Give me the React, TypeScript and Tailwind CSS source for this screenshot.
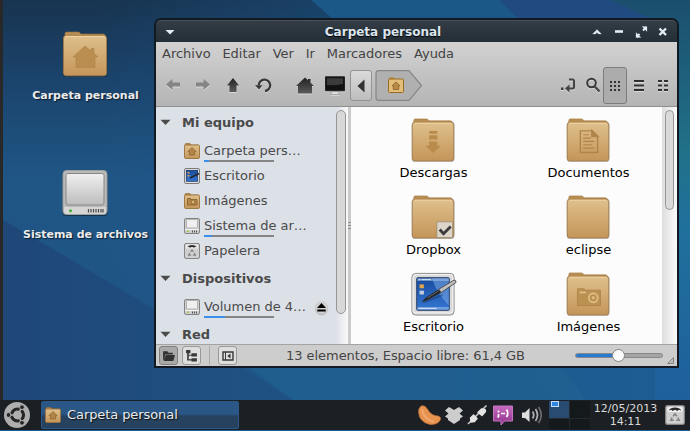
import React from "react";

type Emblem = "home" | "down" | "doc" | "camera" | "check" | "none";

function Defs() {
  return (
    <svg className="absolute h-0 w-0" aria-hidden="true">
      <defs>
        <linearGradient id="folder" x1="0" y1="0" x2="0" y2="1">
          <stop offset="0" stopColor="#dfc08c" />
          <stop offset="1" stopColor="#c4955a" />
        </linearGradient>
        <linearGradient id="silver" x1="0" y1="0" x2="0" y2="1">
          <stop offset="0" stopColor="#f0f0f0" />
          <stop offset="1" stopColor="#bdbdbd" />
        </linearGradient>
        <linearGradient id="screen" x1="0" y1="0" x2="0" y2="1">
          <stop offset="0" stopColor="#174a9c" />
          <stop offset="1" stopColor="#3577d2" />
        </linearGradient>
        <linearGradient id="ink" x1="0" y1="0" x2="0" y2="1">
          <stop offset="0" stopColor="#222" />
          <stop offset="1" stopColor="#5a5a5a" />
        </linearGradient>
        <linearGradient id="purple" x1="0" y1="0" x2="0" y2="1">
          <stop offset="0" stopColor="#c76bc0" />
          <stop offset="1" stopColor="#8e2f8c" />
        </linearGradient>
      </defs>
    </svg>
  );
}

function Folder({ emblem, size = 48 }: { emblem: Emblem; size?: number }) {
  return (
    <svg width={size} height={size} viewBox="0 0 48 48" className="block shrink-0">
      <rect x="1.8" y="5" width="44.6" height="41.8" rx="3.5" fill="#000" opacity=".35" />
      <path d="M4 8V3.500Q4 2 5.500 2H17q1.500 0 2.200 1.200L20 4H42q2 0 2.500 2V12H4z" fill="#b98e52" stroke="#9a733e" strokeWidth=".6" />
      <rect x="2.400" y="5.400" width="43.200" height="40.400" rx="3" fill="url(#folder)" stroke="#a37c48" strokeWidth=".8" />
      <path d="M4.500 6.500H43.500" stroke="#efd5a6" strokeWidth="1" />
      {emblem === "home" && <path d="M24 16L12 27h3v10.500h19V27h3l-4-3.500v-5h-3v2.500z" fill="#b98e50" stroke="#ae8347" strokeWidth=".6" />}
      {emblem === "down" && <path d="M20 14.500h8.500v3H20zM20 19h8.500v4.500H20zM20 25.500h8.500v4.500h4L24 37.500l-8-7.500h4z" fill="#b98c4c" />}
      {emblem === "doc" && (
        <g fill="none" stroke="#b0854a" strokeWidth="1.500">
          <path d="M16 14.500H28.500l5.500 5.500V37H16z" />
          <path d="M28 14v6.500h6.500z" fill="#b0854a" />
          <path d="M19 18.500h6M19 22h8M19 25.500h11.500M19 29h9M19 32.500h11.500" strokeWidth="1.200" />
        </g>
      )}
      {emblem === "camera" && (
        <g>
          <path d="M13 20v-1.500h7V20H37V36H13z" fill="#bb9152" stroke="#ab8246" strokeWidth=".8" />
          <rect x="15" y="21.500" width="7" height="1.800" fill="#dfc08b" />
          <circle cx="29.500" cy="28" r="4.600" fill="#b98c4c" stroke="#d9b980" strokeWidth="2.200" />
          <circle cx="29.500" cy="28" r="1.800" fill="#dab97e" />
        </g>
      )}
      {emblem === "check" && (
        <g>
          <rect x="28" y="29" width="16.500" height="16.500" rx="1" fill="#ddd5c9" stroke="#94886f" strokeWidth=".8" />
          <path d="M31 37l4 4.500 7.500-7.500" fill="none" stroke="#3c3c3c" strokeWidth="3" />
        </g>
      )}
    </svg>
  );
}

function BigDrive() {
  return (
    <svg width="48" height="48" viewBox="0 0 48 48" className="block">
      <rect x="1.500" y="2" width="45" height="45" rx="3.500" fill="#000" opacity=".4" />
      <rect x="2" y="1.500" width="44" height="44" rx="3.500" fill="#bababa" stroke="#a0a0a0" />
      <path d="M3 38H45V43q0 2-2.500 2H5.500Q3 45 3 43z" fill="#d5d5d5" />
      <rect x="5" y="4.500" width="38" height="31.500" rx="2" fill="url(#silver)" stroke="#868686" />
      <circle cx="9.500" cy="41.700" r="1.500" fill="#3fae2e" />
      <path d="M27.500 40v3.500M30 40v3.500M32.500 40v3.500M35 40v3.500M37.500 40v3.500M40 40v3.500M42 40v3.500" stroke="#4b4b4b" strokeWidth="1.200" />
    </svg>
  );
}

function BigDesktop() {
  return (
    <svg width="46" height="46" viewBox="0 0 48 48" className="block overflow-visible">
      <rect x="2" y="2.500" width="44" height="43.500" rx="4" fill="#d8d8d8" stroke="#8c8c8c" />
      <rect x="3.300" y="3.800" width="41.400" height="40" rx="3" fill="none" stroke="#f7f7f7" strokeWidth="1" />
      <rect x="7" y="7" width="34" height="34" rx="1" fill="url(#screen)" stroke="#243a62" />
      <path d="M23 7.500H40.500V36Q27 22 23 7.500z" fill="#83b2ee" opacity=".5" />
      <path d="M7.500 7.500h33v3h-33zM7.500 37.500h33v3h-33z" fill="#9fc1ed" opacity=".55" />
      <path d="M9 9h2M12 9h10M9 39h19" stroke="#dce8f8" strokeWidth="1" />
      <rect x="10" y="14" width="4.500" height="4" fill="#dfa64c" />
      <rect x="10" y="20.500" width="4.500" height="4" fill="#c4ced9" />
      <path d="M14 33L34 25" stroke="#123" opacity=".3" strokeWidth="2" />
      <path d="M12 32.500L17 27.500 30 19 32.500 22.500 19 30z" fill="#262626" />
      <path d="M30 19L46 9.500Q48.500 9.500 48 12L32.500 22.500z" fill="#bdbdbd" stroke="#444" strokeWidth=".9" />
      <path d="M18 28.300L30 20.500" stroke="#777" strokeWidth=".8" />
    </svg>
  );
}

type SmallKind = "home" | "camera" | "desktop" | "drive" | "trash";

function SmallIcon({ kind, size = 16 }: { kind: SmallKind; size?: number }) {
  return (
    <svg width={size} height={size} viewBox="0 0 16 16" className="block shrink-0">
      {(kind === "home" || kind === "camera") && (
        <g>
          <path d="M1 4V1.500Q1 .5 2 .5H6l1 1.500H14.500V4z" fill="#bc8c47" stroke="#8f6930" strokeWidth=".6" />
          <rect x=".5" y="2" width="15" height="13.500" rx="1.200" fill="url(#folder)" stroke="#9b713a" strokeWidth=".9" />
        </g>
      )}
      {kind === "home" && <path d="M8 4.500L4 8.500H5.300v3.500h5.400V8.500H12z" fill="#b38447" stroke="#87602b" strokeWidth=".7" />}
      {kind === "camera" && (
        <g stroke="#8b632f" strokeWidth=".9" fill="#b8874a">
          <path d="M3.500 5.500h3V6.500H13v5.500H3.500z" />
          <circle cx="9" cy="9" r="2" fill="#dbb779" />
        </g>
      )}
      {kind === "desktop" && (
        <g>
          <rect x=".5" y=".5" width="15" height="15" rx="1.500" fill="#e0e0e0" stroke="#7b7b7b" />
          <rect x="2.300" y="2.300" width="11.400" height="11" fill="url(#screen)" stroke="#1a3263" strokeWidth=".7" />
          <path d="M3.500 4h2v1.500h-2zM3.500 7h2v1.500h-2z" fill="#e5a94c" />
          <path d="M6 10L15 5.500" stroke="#252525" strokeWidth="1.500" />
        </g>
      )}
      {kind === "drive" && (
        <g>
          <rect x=".5" y=".5" width="15" height="15" rx="1.500" fill="#cecece" stroke="#838383" />
          <rect x="2.500" y="1.500" width="11" height="8.500" rx=".7" fill="#efefef" stroke="#a0a0a0" strokeWidth=".7" />
          <path d="M1 11.500H15" stroke="#f5f5f5" />
          <rect x="3" y="12.500" width="1.500" height="1.500" fill="#8ec919" />
          <path d="M8.500 12.500v2M10.500 12.500v2M12.500 12.500v2" stroke="#555" />
        </g>
      )}
      {kind === "trash" && (
        <g>
          <rect x=".5" y=".5" width="15" height="15" rx="1.500" fill="#cfcfcf" stroke="#858585" />
          <rect x="1.800" y="1.300" width="12.400" height="4.200" rx="1.500" fill="#eee" />
          <path d="M3 4.300Q4.500 2 8 2T13 4.300L11 3.800l-1 .9L8 3.800 6 4.700 5 3.800z" fill="#292929" />
          <path d="M6.500 9L8 7l1.500 2M10.300 10l1 2.200H9M7 12.200H4.700L5.700 10" fill="none" stroke="#808080" strokeWidth="1.200" />
        </g>
      )}
    </svg>
  );
}

function Wallpaper() {
  return (
    <svg className="absolute inset-0" width="690" height="431" viewBox="0 0 690 431" preserveAspectRatio="none">
      <defs>
        <linearGradient id="sky" x1="0" y1="0" x2="0" y2="1">
          <stop offset="0" stopColor="#183450" />
          <stop offset=".18" stopColor="#1b436b" />
          <stop offset=".42" stopColor="#1f5686" />
          <stop offset="1" stopColor="#1e5484" />
        </linearGradient>
        <linearGradient id="east" x1="0" y1="0" x2="1" y2="0">
          <stop offset="0" stopColor="#1c5f98" stopOpacity="0" />
          <stop offset="1" stopColor="#1c5f98" />
        </linearGradient>
        <linearGradient id="teal" x1="0" y1="0" x2="0" y2="1">
          <stop offset="0" stopColor="#1b4f6d" />
          <stop offset=".35" stopColor="#217189" />
          <stop offset=".52" stopColor="#20709c" />
          <stop offset="1" stopColor="#1e5d9c" />
        </linearGradient>
        <linearGradient id="dusk" x1="0" y1="0" x2="1" y2="0">
          <stop offset="0" stopColor="#1f4778" />
          <stop offset="1" stopColor="#1f5383" />
        </linearGradient>
      </defs>
      <rect width="690" height="431" fill="url(#sky)" />
      <rect x="100" width="590" height="431" fill="url(#east)" opacity=".8" />
      <path d="M311 0H500L520 20H334z" fill="#1b5787" />
      <path d="M500 0H610L655 20H520z" fill="#214b80" />
      <path d="M610 0H690V431H655V20z" fill="url(#teal)" />
      <path d="M3 220L55 250L152 308L300 405H3z" fill="url(#dusk)" />
      <path d="M246 365H560L590 405H300z" fill="#216391" opacity=".6" />
    </svg>
  );
}

function DesktopIcon({ label, className, children }: { label: string; className: string; children: React.ReactNode }) {
  return (
    <div className={`absolute flex w-[140px] flex-col items-center ${className}`}>
      {children}
      <span className="ml-[1px] mt-[9px] whitespace-nowrap text-[11px] font-bold leading-[17px] text-[#ececec] [text-shadow:1px_1px_1px_#0b1c2e]">{label}</span>
    </div>
  );
}

function TitleBar() {
  return (
    <div className="relative flex h-[22px] shrink-0 items-center justify-between rounded-t-[5px] border-t border-[#475059] bg-linear-to-b from-[#343d45] to-[#242e37] pl-[9px] pr-[9px]">
      <svg width="10" height="6" viewBox="0 0 10 6"><path d="M.5 1h9L5 5.500z" fill="#e2ecf4" /></svg>
      <span className="absolute -left-[67px] right-0 top-[3px] text-center text-[12px] font-bold leading-[17px] text-[#dce6f0] [text-shadow:0_1px_1px_#000]">Carpeta personal</span>
      <svg width="77" height="14" viewBox="0 0 77 14" fill="none" stroke="#e2edf3">
        <path d="M1.500 9L6 4.500 10.500 9H7.500L6 7.500 4.500 9z" fill="#e2edf3" strokeWidth=".2" />
        <path d="M24 6.500h8" strokeWidth="2.600" />
        <path d="M52 5.500L55 2.500M48.500 9L45.500 12" strokeWidth="2" />
        <path d="M51 1.500h5v5zM50 12.500h-5v-5z" fill="#e2edf3" strokeWidth=".2" />
        <path d="M68.500 3.500l6.500 6.500M75 3.500L68.500 10" strokeWidth="2.400" />
      </svg>
    </div>
  );
}

const menus = ["Archivo", "Editar", "Ver", "Ir", "Marcadores", "Ayuda"];

function ToolIcon({ className, children }: { className: string; children: React.ReactNode }) {
  return (
    <div className={`flex h-[38px] shrink-0 items-center justify-center ${className}`}>
      <svg width="22" height="20" viewBox="0 0 22 20" className="shrink-0 [filter:drop-shadow(0_1px_0_rgba(255,255,255,0.45))]">{children}</svg>
    </div>
  );
}

function Toolbar() {
  return (
    <div className="flex h-[41px] shrink-0 items-center justify-between pl-[2px] pr-[2px]">
      <div className="flex items-center">
        <ToolIcon className="w-[30px]"><path d="M4 8.500L10.500 3V6.500H18v4h-7.500V14z" fill="#858585" /></ToolIcon>
        <ToolIcon className="w-[30px]"><path d="M18 8.500L11.500 3V6.500H4v4h7.500V14z" fill="#858585" /></ToolIcon>
        <ToolIcon className="w-[30px]"><path d="M11 2L17 9.500h-2.500v6.500h-7V9.500H5z" fill="url(#ink)" /></ToolIcon>
        <ToolIcon className="w-[32px]">
          <path d="M5.800 9.500A5.700 5.700 0 1 1 12 15" fill="none" stroke="#3a3a3a" strokeWidth="2.300" />
          <path d="M2 9.300h7.500L6 13.500z" fill="#3a3a3a" />
        </ToolIcon>
        <ToolIcon className="ml-[10px] w-[30px]"><path d="M11 1.500L2 10h2v7.500h14V10h2l-3.500-3.300V3H14v1.300z" fill="url(#ink)" /></ToolIcon>
        <ToolIcon className="w-[30px]">
          <path d="M1.500 .8h19v14h-19z" fill="#111" stroke="#222" />
          <path d="M3 2.300h16v5.500Q11 10 3 9z" fill="#3b3b3b" />
          <path d="M8 15.500h6l1.500 3h-9z" fill="#ddd" stroke="#888" strokeWidth=".6" />
        </ToolIcon>
        <div className="flex h-[31px] w-[22px] items-center justify-center rounded-[3px] border border-[#939393] bg-linear-to-b from-[#dadada] to-[#bebebe]">
          <svg width="8" height="14" viewBox="0 0 8 14"><path d="M7.500.5v13L.5 7z" fill="#333" /></svg>
        </div>
        <svg className="ml-[3px]" width="48" height="31" viewBox="0 0 48 31">
          <path d="M3.500.7H34L46.500 15.500 34 30.300H3.500Q1 30.300 1 27.500V3.500Q1 .7 3.500.7z" fill="#b0b0b0" stroke="#868686" strokeWidth="1.200" />
          <g transform="translate(13 7)">
            <path d="M1 4V1.500Q1 .5 2 .5H6l1 1.500H14.500V4z" fill="#b5822f" />
            <rect x=".5" y="2" width="15" height="13.500" rx="1" fill="#e3bd7a" stroke="#9a6c29" />
            <path d="M8 5L4 8.800h1.300v3.700h5.400V8.800H12z" fill="#b88a45" stroke="#8c622b" strokeWidth=".8" />
          </g>
        </svg>
      </div>
      <div className="flex items-center">
        <ToolIcon className="w-[28px]">
          <path d="M12 3.500h3.500q1.500 0 1.500 1.500v6q0 1.500-1.500 1.500H12" fill="none" stroke="#444" strokeWidth="2" />
          <path d="M12.500 8.500v8L8 12.500z" fill="#444" /><path d="M4 11.500h2.500v2.500H4z" fill="#444" />
        </ToolIcon>
        <ToolIcon className="w-[21px]">
          <circle cx="9.500" cy="7" r="4.300" fill="none" stroke="#383838" strokeWidth="2" />
          <path d="M12.700 10.500l4.800 5" stroke="#484848" strokeWidth="2.400" />
        </ToolIcon>
        <div className="-mt-px flex h-[37px] w-[24px] items-center justify-center rounded-[3px] border border-[#7c7c7c] bg-[#acacac]">
          <div className="mt-[2px] grid grid-cols-3 gap-[2px]">
            {Array.from({ length: 9 }, (_, i) => <i key={i} className="h-[2px] w-[2px] bg-[#333]" />)}
          </div>
        </div>
        <ToolIcon className="w-[24px]"><path d="M6 5h10M6 9.500h10M6 14h10" stroke="#303030" strokeWidth="2" /></ToolIcon>
        <ToolIcon className="w-[24px]"><path d="M6 5h4M12 5h4M6 9.500h4M12 9.500h4M6 14h4M12 14h4" stroke="#303030" strokeWidth="2" /></ToolIcon>
      </div>
    </div>
  );
}

function SideHeader({ label, className }: { label: string; className: string }) {
  return (
    <div className={`flex shrink-0 items-center pl-[4px] text-[13px] font-bold text-[#4a4a4a] ${className}`}>
      <svg width="11" height="7" viewBox="0 0 11 7" className="mr-[11px]"><path d="M.5 .8h10L5.500 6z" fill="#4b4b4b" /></svg>
      {label}
    </div>
  );
}

function SideItem({ label, kind, usage, eject }: { label: string; kind: SmallKind; usage?: number; eject?: boolean }) {
  return (
    <div className="relative flex h-[25px] shrink-0 items-center pl-[28px] text-[13px] text-[#4a4a4a]">
      <SmallIcon kind={kind} />
      <span className="ml-[4px] whitespace-nowrap tracking-[-0.03px]">{label}</span>
      {usage !== undefined && (
        <div className="absolute bottom-[1px] left-[48px] h-[2px] w-[70px] bg-[#858585]">
          <div className="h-full bg-[#3b8fe8]" style={{ width: usage }} />
        </div>
      )}
      {eject && (
        <div className="absolute right-[8px] top-[7px] flex h-[13px] w-[13px] items-center justify-center rounded-full bg-[#d0d0d0] shadow-[0_1px_1px_#aaa]">
          <svg width="9" height="9" viewBox="0 0 9 9"><path d="M4.500 0L9 5H0zM.3 6.500h8.400v2H.3z" fill="#000" /></svg>
        </div>
      )}
    </div>
  );
}

function Sidebar() {
  return (
    <div className="flex h-[237px] w-[180px] shrink-0 flex-col overflow-hidden bg-[#dce0e7]">
      <SideHeader label="Mi equipo" className="h-[31px]" />
      <SideItem label="Carpeta pers…" kind="home" usage={5} />
      <SideItem label="Escritorio" kind="desktop" />
      <SideItem label="Imágenes" kind="camera" />
      <SideItem label="Sistema de ar…" kind="drive" usage={8} />
      <SideItem label="Papelera" kind="trash" />
      <SideHeader label="Dispositivos" className="h-[31px]" />
      <SideItem label="Volumen de 4…" kind="drive" usage={21} eject />
      <SideHeader label="Red" className="h-[31px]" />
    </div>
  );
}

const files: { label: string; emblem: Emblem | "desktop" }[] = [
  { label: "Descargas", emblem: "down" },
  { label: "Documentos", emblem: "doc" },
  { label: "Dropbox", emblem: "check" },
  { label: "eclipse", emblem: "none" },
  { label: "Escritorio", emblem: "desktop" },
  { label: "Imágenes", emblem: "camera" },
];

function FileGrid() {
  return (
    <div className="grid flex-1 auto-rows-[77px] grid-cols-[155px_155px] content-start overflow-hidden bg-[#fcfcfc] pl-[5px] pt-[9px]">
      {files.map((f) => (
        <div key={f.label} className="flex flex-col items-center">
          <div className="pr-px pt-px">{f.emblem === "desktop" ? <BigDesktop /> : <Folder emblem={f.emblem} size={46} />}</div>
          <span className="mt-px text-[13px] leading-[17px] text-black">{f.label}</span>
        </div>
      ))}
    </div>
  );
}

function StatusBar() {
  return (
    <div className="flex h-[22px] shrink-0 items-center border-t border-[#a3a3a3] bg-[#cdcdcd] pl-[3px]">
      <div className="flex h-[19px] w-[19px] items-center justify-center rounded-[3px] border border-[#808080] bg-[#a9a9a9]">
        <svg width="13" height="13" viewBox="0 0 12 12"><path d="M1 2h4l1 1.500h4V5H3L2 10H1zM3.500 5.500H12L10.500 11h-9z" fill="#333" /></svg>
      </div>
      <div className="ml-[4px] flex h-[19px] w-[19px] items-center justify-center rounded-[3px] border border-[#999] bg-[#dedede]">
        <svg width="13" height="13" viewBox="0 0 12 12"><path d="M1 1h4v3H1zM6 4h5v3H6zM6 8.500h5v3H6zM2 4h1.500v1.200H6V6.200H3.500V9.500H6v1H2z" fill="#383838" /></svg>
      </div>
      <div className="ml-[8px] h-[19px] w-px bg-[#aaa]" />
      <div className="ml-[8px] flex h-[19px] w-[19px] items-center justify-center rounded-[3px] border border-[#999] bg-[#dedede]">
        <svg width="12" height="12" viewBox="0 0 12 12"><path d="M1 2h10v8H1z" fill="none" stroke="#383838" strokeWidth="1.400" /><path d="M3.500 2v8" stroke="#383838" /><path d="M8.500 3.500v5L5.300 6z" fill="#333" /></svg>
      </div>
      <span className="ml-[49px] whitespace-nowrap text-[13px] leading-[20px] tracking-[-0.04px] text-[#454545]">13 elementos, Espacio libre: 61,4 GB</span>
      <div className="relative ml-auto mr-[14px] flex h-[5px] w-[88px] rounded-full border border-[#888] bg-[#a5a5a5]">
        <div className="h-full w-[42px] rounded-l-full bg-[#287bd0]" />
        <div className="absolute -top-[5px] left-[36px] h-[13px] w-[13px] rounded-full border border-[#858585] bg-[#fafafa]" />
      </div>
      <svg className="-ml-[10px] mr-[3px] mt-[9px]" width="7" height="7" viewBox="0 0 7 7"><path d="M6.500.5v6h-6z" fill="#bbb" stroke="#858585" /></svg>
    </div>
  );
}

function FileManager() {
  return (
    <div className="absolute left-[154px] top-[18px] flex h-[350px] w-[525px] flex-col rounded-t-[7px] border-2 border-[#111a22] bg-[#111a22]">
      <TitleBar />
      <div className="flex shrink-0 flex-col border-b border-[#8f8f8f] bg-linear-to-b from-[#d2d2d2] to-[#b4b4b4]">
        <div className="flex h-[23px] items-center gap-[11.8px] pl-[6px] text-[13px] text-[#444]">
          {menus.map((m) => <span key={m} className="leading-[20px]">{m}</span>)}
        </div>
        <Toolbar />
      </div>
      <div className="flex h-[237px] shrink-0">
        <Sidebar />
        <div className="w-[12px] shrink-0 bg-linear-to-r from-[#dce0e7] to-[#f9f9f9] pt-[3px]">
          <div className="h-[204px] w-[10px] rounded-full border border-[#969696] bg-[#d8d8d8]" />
        </div>
        <div className="flex w-[3px] shrink-0 flex-col items-center justify-center gap-[2px] bg-[#cbcbcb]">
          <i className="h-px w-full bg-[#8e8e8e]" /><i className="h-px w-full bg-[#8e8e8e]" /><i className="h-px w-full bg-[#8e8e8e]" />
        </div>
        <FileGrid />
        <div className="w-[15px] shrink-0 bg-linear-to-r from-[#dedede] to-[#fbfbfb] pl-[3px] pt-[3px]">
          <div className="h-[100px] w-[9px] rounded-full border border-[#969696] bg-[#dadada]" />
        </div>
      </div>
      <StatusBar />
    </div>
  );
}

function Tray() {
  return (
    <svg width="128" height="28" viewBox="0 0 128 28" className="shrink-0">
      <path d="M4 5Q8 3.500 11 9q3 5.500 10 6 4 1 2 4.500-3 4.500-10 4Q2 21 1.500 11 1.500 7 4 5z" fill="#e89250" stroke="#c36f36" strokeWidth=".6" />
      <path d="M5 8q1.500 10 12 13" stroke="#f6bd8c" strokeWidth="1.800" fill="none" opacity=".55" />
      <path d="M32 6l5 3 5-3 4 3.500-3.500 3 3.500 3-3 2v1.500l-6 4-6-4v-1.500l-3-2 3.500-3-3.500-3z" fill="#cdcdcd" />
      <path d="M51 23L69.500 4.500" stroke="#c8c8c8" strokeWidth="1.600" />
      <path d="M53.500 17l3-3 3.500 3.500-2.500 3-3.500 .5zM61 11.500l3.500-3.500 3.500 .5 .5 2-3.500 4z" fill="#e4e4e4" stroke="#e4e4e4" strokeLinejoin="round" strokeWidth="1.400" />
      <path d="M76.500 5h19v15h-8l-3.500 4v-4h-7.500z" fill="url(#purple)" stroke="#c276ba" strokeWidth="1" />
      <path d="M81.500 9.500v2M81.500 13v2.500l-.8 1M84 12.500h4M89.500 8.500q2.500 4 0 7.500" stroke="#fff" strokeWidth="1.700" fill="none" />
      <path d="M105 11.500h3l4.500-4.500v14L108 17h-3z" fill="#ddd" />
      <path d="M115.500 10.500q2.500 3.500 0 7M118.500 8q4 6 0 12" fill="none" stroke="#b0b0b0" strokeWidth="1.800" />
      <path d="M121.500 6q5.500 8 0 16" fill="none" stroke="#707070" strokeWidth="1.600" />
    </svg>
  );
}

function Taskbar() {
  return (
    <div className="absolute inset-x-0 bottom-0 flex h-[31px] items-center border-b border-[#1b5d95] bg-[#1c2024]">
      <svg width="28" height="28" viewBox="0 0 28 28" className="ml-[3px] shrink-0">
        <circle cx="14" cy="14" r="13" fill="#aeaeae" />
        <circle cx="14.500" cy="14" r="6" fill="none" stroke="#252525" strokeWidth="3.200" />
        <path d="M14.500 14L4.500 14M14.500 14L19.500 5.500M14.500 14L19.500 22.500" stroke="#aeaeae" strokeWidth="1.500" />
        <circle cx="14.500" cy="14" r="4" fill="#aeaeae" />
        <g fill="#252525" stroke="#aeaeae" strokeWidth="1"><circle cx="5.500" cy="14" r="2.400" /><circle cx="19" cy="6.200" r="2.400" /><circle cx="19" cy="21.800" r="2.400" /></g>
      </svg>
      <div className="ml-[10px] flex h-[28px] w-[198px] shrink-0 items-center rounded-[2px] border border-[#285788] bg-linear-to-b from-[#2b5787] from-45% to-[#26425f] to-55% pl-[3px]">
        <SmallIcon kind="home" />
        <span className="ml-[6px] whitespace-nowrap text-[13px] tracking-[-0.08px] text-[#e6ebef] [text-shadow:1px_1px_1px_#111]">Carpeta personal</span>
      </div>
      <div className="ml-auto flex items-center">
        <Tray />
        <div className="ml-[4px] grid h-[28px] w-[41px] shrink-0 grid-cols-2 gap-px bg-[#252a2e]">
          <div className="bg-[#294b72] pl-[2px]"><div className="h-[6px] w-[8px] border border-[#c0dffd] bg-[#3184df]" /></div>
          <div className="bg-[#14191c]" /><div className="bg-[#14191c]" /><div className="bg-[#14191c]" />
        </div>
        <div className="ml-[3px] w-[65px] text-center text-[11px] leading-[13px] text-[#d8d8d8]"><div>12/05/2013</div><div>14:11</div></div>
        <div className="ml-[7px] mr-[5px]"><SmallIcon kind="trash" size={20} /></div>
      </div>
    </div>
  );
}

export default function App() {
  return (
    <div className="relative h-[431px] w-[690px] overflow-hidden font-['DejaVu_Sans',sans-serif]">
      <Defs />
      <Wallpaper />
      <div className="absolute inset-y-0 left-0 w-[3px] bg-[#282828]" />
      <DesktopIcon label="Carpeta personal" className="left-[15px] top-[30px]"><Folder emblem="home" /></DesktopIcon>
      <DesktopIcon label="Sistema de archivos" className="left-[15px] top-[169px]"><BigDrive /></DesktopIcon>
      <FileManager />
      <Taskbar />
    </div>
  );
}
